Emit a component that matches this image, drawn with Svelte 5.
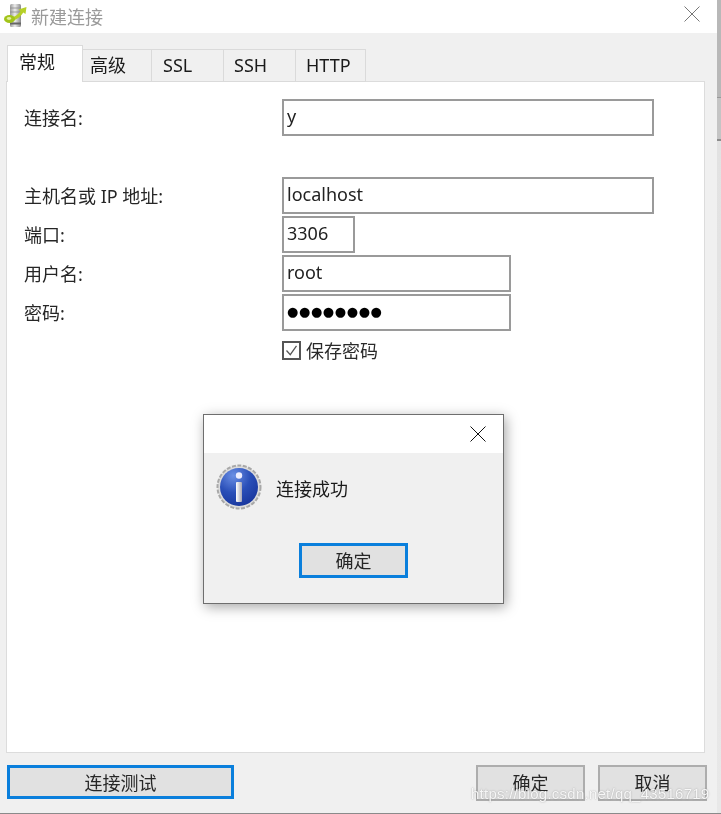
<script>
  const tabs = [
    { label: '常规', active: true },
    { label: '高级' },
    { label: 'SSL' },
    { label: 'SSH' },
    { label: 'HTTP' }
  ];
</script>

<div class="window">
  <header class="titlebar">
    <svg class="appicon" viewBox="0 0 28 26" width="28" height="26" aria-hidden="true">
      <defs>
        <linearGradient id="srv" x1="0" x2="1" y1="0" y2="0">
          <stop offset="0" stop-color="#9a9a9a" /><stop offset="0.45" stop-color="#ececec" /><stop offset="1" stop-color="#8a8a8a" />
        </linearGradient>
      </defs>
      <rect x="8" y="0" width="11" height="23" rx="1.5" fill="url(#srv)" />
      <path d="M8 4h11M8 8h11" stroke="#8a8a8a" stroke-width="0.8" />
      <path d="M8 19.5h11" stroke="#666" stroke-width="2" />
      <path d="M24.5 3l-1 7-2.2-1.4c-2 3.6-6 6.6-10.3 8.4l-1-3.4c3.6-1.2 6.6-3.4 8.4-6.4L16.5 5.5z" fill="#b6d028" />
      <ellipse cx="7.5" cy="15" rx="5.5" ry="4" fill="#a2c41a" />
      <ellipse cx="7" cy="14.5" rx="2.2" ry="1.4" fill="#e4f09c" />
    </svg>
    <span class="title">新建连接</span>
    <svg class="close gray" viewBox="0 0 16 16" width="16" height="16" aria-hidden="true">
      <path d="M.5.5l15 15M15.5.5l-15 15" stroke="#777" stroke-width="1" fill="none" />
    </svg>
  </header>

  <main class="body">
    <nav class="tabs">
      {#each tabs as tab}
        <div class="tab" class:active={tab.active}>{tab.label}</div>
      {/each}
    </nav>

    <section class="panel">
      <div class="form">
        <label class="lab" for="f1">连接名:</label>
        <div class="input full" id="f1">y</div>
        <div class="spacer"></div>
        <label class="lab" for="f2">主机名或 IP 地址:</label>
        <div class="input full" id="f2">localhost</div>
        <label class="lab" for="f3">端口:</label>
        <div class="input port" id="f3">3306</div>
        <label class="lab" for="f4">用户名:</label>
        <div class="input mid" id="f4">root</div>
        <label class="lab" for="f5">密码:</label>
        <div class="input mid dots" id="f5">●●●●●●●●</div>
        <div class="checkline">
          <span class="check">
            <svg viewBox="0 0 18 18" width="18" height="18" aria-hidden="true">
              <path d="M3 9l4.5 5L15 3.5" fill="none" stroke="#555" stroke-width="1.5" />
            </svg>
          </span>
          <span class="checklabel">保存密码</span>
        </div>
      </div>
    </section>

    <footer class="actions">
      <button class="btn focus test">连接测试</button>
      <div class="right">
        <button class="btn">确定</button>
        <button class="btn">取消</button>
      </div>
    </footer>
  </main>

  <div class="strip"></div>
  <div class="edge"></div>

  <div class="dialog">
    <div class="dlg-head">
      <svg viewBox="0 0 16 16" width="16" height="16" aria-hidden="true">
        <path d="M.5.5l15 15M15.5.5l-15 15" stroke="#111" stroke-width="1" fill="none" />
      </svg>
    </div>
    <div class="dlg-body">
      <div class="dlg-msg">
        <svg viewBox="0 0 46 46" width="46" height="46" aria-hidden="true">
          <defs>
            <radialGradient id="blue" cx="0.35" cy="0.2" r="0.9">
              <stop offset="0" stop-color="#6b8fe4" /><stop offset="0.5" stop-color="#2a4fb8" /><stop offset="1" stop-color="#16339a" />
            </radialGradient>
            <linearGradient id="ibar" x1="0" x2="1" y1="0" y2="0">
              <stop offset="0" stop-color="#fff" /><stop offset="1" stop-color="#a9a9b8" />
            </linearGradient>
          </defs>
          <circle cx="23" cy="23" r="21.5" fill="#dcdcdc" stroke="#a8a8a8" stroke-width="2" stroke-dasharray="4 1.5" />
          <circle cx="23" cy="23" r="19" fill="url(#blue)" />
          <circle cx="23" cy="11.5" r="3.2" fill="#eef" />
          <rect x="20" y="18" width="6" height="20" rx="1" fill="url(#ibar)" />
        </svg>
        <span class="dlg-text">连接成功</span>
      </div>
      <div class="dlg-actions">
        <button class="btn focus ok">确定</button>
      </div>
    </div>
  </div>

  <div class="watermark">https://blog.csdn.net/qq_43516719</div>
</div>

<style>
  :global(body) {
    margin: 0;
    background: #fff;
  }
  .window {
    position: relative;
    width: 721px;
    height: 814px;
    overflow: hidden;
    display: flex;
    flex-direction: column;
    background: #f0f0f0;
    font-family: "Noto Sans", "Noto Sans CJK SC", sans-serif;
    font-size: 18px;
    color: #1a1a1a;
    filter: blur(0.35px);
  }
  .titlebar {
    height: 33px;
    flex: none;
    background: #fff;
    display: flex;
    align-items: center;
    padding: 0 21px 0 2px;
    box-sizing: border-box;
  }
  .appicon {
    flex: none;
  }
  .title {
    margin-left: 1px;
    font-size: 18px;
    color: #9a9a9a;
    line-height: 26px;
  }
  .close {
    margin-left: auto;
    margin-top: -5px;
  }
  .body {
    flex: 1;
    display: flex;
    flex-direction: column;
    padding: 12px 16px 13px 6px;
    min-height: 0;
  }
  .tabs {
    display: flex;
    align-items: flex-end;
    height: 37px;
    margin-left: 1px;
    position: relative;
    z-index: 1;
    margin-bottom: -1px;
  }
  .tab {
    box-sizing: border-box;
    height: 33px;
    padding-left: 11px;
    line-height: 30px;
    border: 1px solid #dadada;
    border-left: 0;
    border-bottom: 1px solid #dadada;
    font-size: 18px;
  }
  .tab:nth-child(2) { width: 69px; padding-left: 7px; }
  .tab:nth-child(3) { width: 72px; }
  .tab:nth-child(4) { width: 72px; padding-left: 10px; }
  .tab:nth-child(5) { width: 70px; padding-left: 10px; }
  .tab.active {
    width: 76px;
    height: 37px;
    background: #fff;
    border-left: 1px solid #dadada;
    border-bottom: 0;
    line-height: 32px;
  }
  .panel {
    flex: 1;
    box-sizing: border-box;
    background: #fff;
    border: 1px solid #dcdcdc;
    padding: 17px 0 0 17px;
    min-height: 0;
  }
  .form {
    display: grid;
    grid-template-columns: 258px 1fr;
    row-gap: 2px;
    align-items: center;
  }
  .lab {
    font-size: 18px;
    line-height: 24px;
    margin-top: 0;
    color: #262626;
  }
  .spacer {
    grid-column: 1 / -1;
    height: 37px;
  }
  .input {
    box-sizing: border-box;
    height: 37px;
    border: 2px solid #9a9a9a;
    background: #fff;
    padding-left: 3px;
    line-height: 31px;
    font-size: 18px;
    color: #222;
  }
  .full { width: 372px; }
  .port { width: 73px; }
  .mid { width: 229px; }
  .dots {
    font-size: 13px;
    letter-spacing: 0.6px;
    line-height: 32px;
    color: #000;
    font-family: "DejaVu Sans", sans-serif;
  }
  .checkline {
    grid-column: 2;
    display: flex;
    align-items: center;
    gap: 5px;
    margin-top: 6px;
    height: 22px;
  }
  .check {
    box-sizing: border-box;
    width: 19px;
    height: 19px;
    border: 2px solid #555;
    display: flex;
    align-items: center;
    justify-content: center;
    background: #fff;
  }
  .check svg {
    width: 15px;
    height: 15px;
  }
  .checklabel {
    font-size: 18px;
    color: #2a2a2a;
  }
  .actions {
    display: flex;
    justify-content: space-between;
    align-items: flex-start;
    margin-top: 12px;
    height: 36px;
    flex: none;
    padding-left: 1px;
    margin-right: -2px;
  }
  .right {
    display: flex;
    gap: 13px;
  }
  .btn {
    box-sizing: border-box;
    width: 109px;
    height: 36px;
    background: #e1e1e1;
    border: 2px solid #adadad;
    font: inherit;
    font-size: 18px;
    color: #262626;
    padding: 0;
    line-height: 30px;
  }
  .btn.focus {
    border: 3px solid #0a7fdc;
  }
  .btn.test {
    width: 227px;
    height: 34px;
  }
  .btn.ok {
    width: 109px;
    height: 35px;
  }
  .strip {
    position: absolute;
    top: 0;
    right: 0;
    bottom: 0;
    width: 4px;
    background: linear-gradient(
      to bottom,
      #b8b8b8 0 97px,
      #999 97px 98px,
      #c4c4c4 98px 139px,
      #8c8c8c 139px 141px,
      #e2e2e2 141px,
      #e8e8e8 100%
    );
  }
  .edge {
    position: absolute;
    left: 0;
    right: 0;
    bottom: 0;
    height: 1px;
    background: #8a8a8a;
  }
  .dialog {
    position: absolute;
    left: 203px;
    top: 414px;
    width: 301px;
    height: 190px;
    box-sizing: border-box;
    border: 1px solid #6e6e6e;
    background: #f0f0f0;
    box-shadow: 2px 3px 12px rgba(0, 0, 0, 0.35);
    display: flex;
    flex-direction: column;
  }
  .dlg-head {
    height: 38px;
    flex: none;
    background: #fff;
    display: flex;
    justify-content: flex-end;
    align-items: center;
    padding-right: 17px;
  }
  .dlg-body {
    flex: 1;
    display: flex;
    flex-direction: column;
    padding: 11px 0 0 12px;
  }
  .dlg-msg {
    display: flex;
    align-items: center;
    gap: 14px;
  }
  .dlg-text {
    font-size: 18px;
    position: relative;
    top: 1px;
  }
  .dlg-actions {
    display: flex;
    justify-content: flex-start;
    margin-top: 33px;
    padding-left: 83px;
  }
  .watermark {
    position: absolute;
    left: 471px;
    top: 785px;
    font-family: "Liberation Sans", sans-serif;
    font-size: 15px;
    letter-spacing: 0.25px;
    color: rgba(255, 255, 255, 0.9);
    text-shadow: 0 0 1.5px rgba(110, 110, 110, 0.7);
    white-space: nowrap;
  }
</style>
